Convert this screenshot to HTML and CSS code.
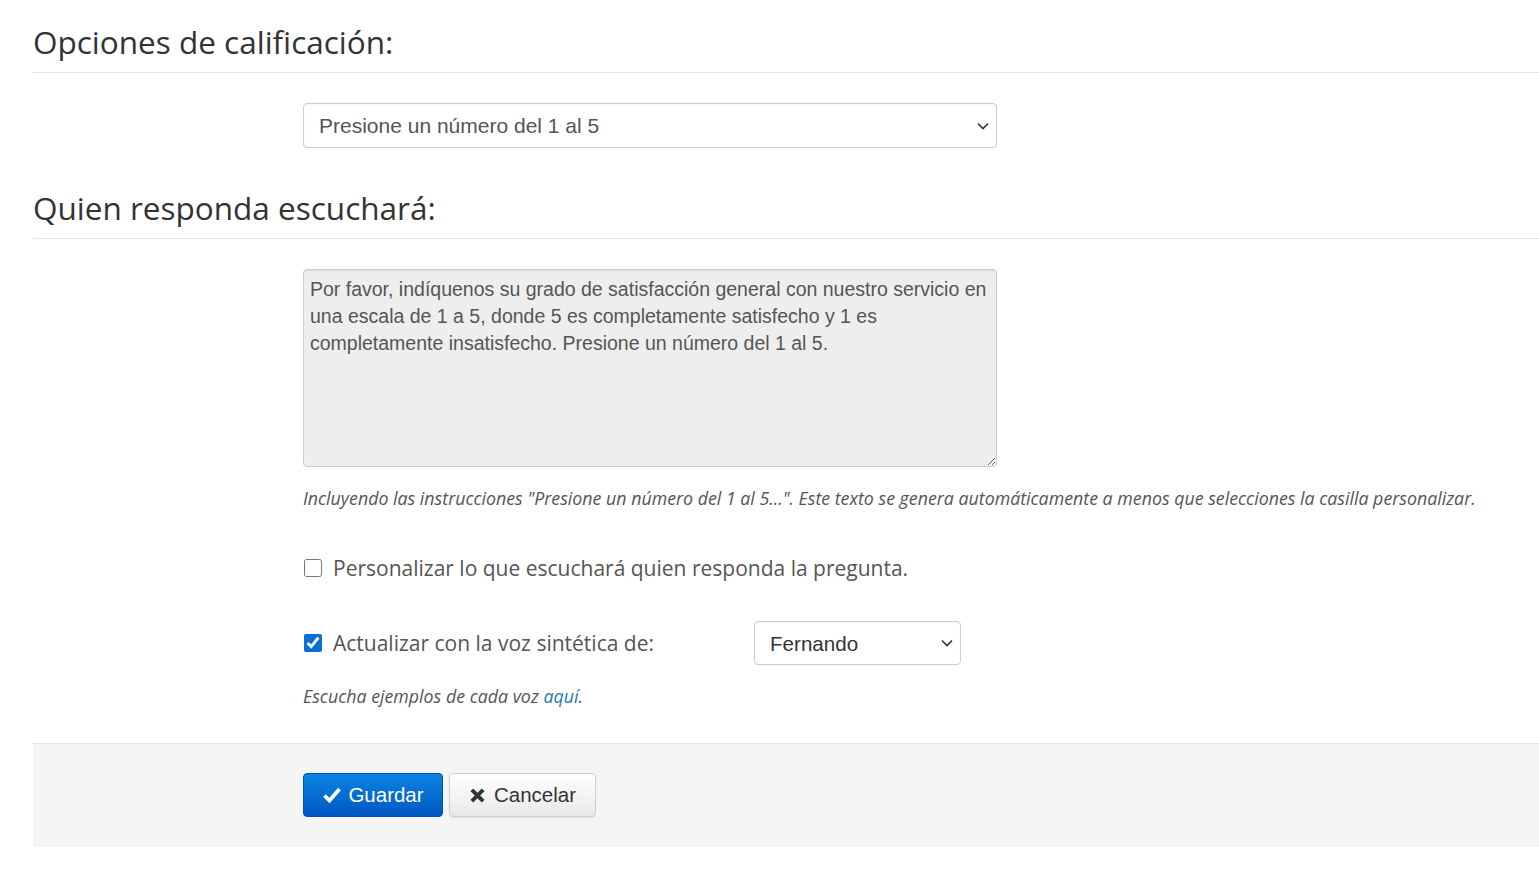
FILE: index.html
```html
<!DOCTYPE html>
<html lang="es">
<head>
<meta charset="utf-8">
<title>Opciones de calificación</title>
<link rel="stylesheet" href="styles.css">
</head>
<body>
<div class="page">
  <section class="section">
    <h2 class="section-title">Opciones de calificación:</h2>
    <div class="field">
      <div class="select-wrap select-wide">
        <select class="select"><option>Presione un número del 1 al 5</option></select>
        <svg class="chevron" viewBox="0 0 12 8" width="12" height="8"><path d="M1 1.5 L6 6.5 L11 1.5" fill="none" stroke="#333" stroke-width="1.6"/></svg>
      </div>
    </div>
  </section>

  <section class="section section-second">
    <h2 class="section-title">Quien responda escuchará:</h2>
    <div class="field">
      <textarea class="textarea" readonly>Por favor, indíquenos su grado de satisfacción general con nuestro servicio en una escala de 1 a 5, donde 5 es completamente satisfecho y 1 es completamente insatisfecho. Presione un número del 1 al 5.</textarea>
      <p class="help help-first">Incluyendo las instrucciones "Presione un número del 1 al 5...". Este texto se genera automáticamente a menos que selecciones la casilla personalizar.</p>

      <label class="check-row row-first">
        <input type="checkbox" class="check">
        <span class="check-label">Personalizar lo que escuchará quien responda la pregunta.</span>
      </label>

      <div class="check-row row-second">
        <input type="checkbox" class="check" checked>
        <span class="check-label label-fixed">Actualizar con la voz sintética de:</span>
        <div class="select-wrap select-voice">
          <select class="select"><option>Fernando</option></select>
          <svg class="chevron" viewBox="0 0 12 8" width="12" height="8"><path d="M1 1.5 L6 6.5 L11 1.5" fill="none" stroke="#333" stroke-width="1.6"/></svg>
        </div>
      </div>

      <p class="help help-last">Escucha ejemplos de cada voz <a href="#" class="link">aquí</a>.</p>
    </div>
  </section>

  <div class="footer">
    <div class="actions">
      <button class="btn btn-primary">
        <svg class="btn-icon" viewBox="0 0 20 18" width="20" height="18"><path d="M2.5 9.5 L7.5 14.5 L17.5 3" fill="none" stroke="#fff" stroke-width="3.8" stroke-linejoin="miter"/></svg>
        <span>Guardar</span>
      </button>
      <button class="btn btn-default">
        <svg class="btn-icon" viewBox="0 0 18 18" width="17" height="17"><path d="M3 3 L15 15 M15 3 L3 15" fill="none" stroke="#333" stroke-width="4"/></svg>
        <span>Cancelar</span>
      </button>
    </div>
  </div>
</div>
</body>
</html>
```

FILE: styles.css
```css
html, body {
  margin: 0;
  padding: 0;
  background: #fff;
}

body {
  font-family: "Open Sans", "Liberation Sans", sans-serif;
  color: #333;
  overflow: hidden;
}

.page {
  padding-left: 33px;
}

.section-title {
  margin: 0;
  font-family: "Open Sans", sans-serif;
  font-weight: 400;
  font-size: 31.5px;
  line-height: 40px;
  color: #333;
  padding-bottom: 10px;
  border-bottom: 1px solid #e5e5e5;
}

.section {
  padding-top: 22px;
}

.section-second {
  padding-top: 40px;
}

.field {
  padding-left: 270px;
  padding-top: 30px;
}

.select-wrap {
  position: relative;
}

.select-wide {
  width: 694px;
}

.select-voice {
  width: 207px;
}

.select {
  appearance: none;
  -webkit-appearance: none;
  display: block;
  width: 100%;
  height: 45px;
  box-sizing: border-box;
  margin: 0;
  padding: 0 36px 0 15px;
  border: 1px solid #ccc;
  border-radius: 4px;
  background: #fff;
  font-family: "Liberation Sans", Arial, sans-serif;
  font-size: 21px;
  color: #555;
  box-shadow: inset 0 1px 1px rgba(0,0,0,0.04);
}

.select-voice .select {
  height: 44px;
  color: #333;
  font-size: 20.6px;
}

.chevron {
  position: absolute;
  right: 8px;
  top: 50%;
  margin-top: -4px;
  pointer-events: none;
}

.textarea {
  display: block;
  width: 694px;
  height: 198px;
  box-sizing: border-box;
  margin: 0;
  padding: 6px 6px;
  border: 1px solid #ccc;
  border-radius: 4px;
  background: #eee;
  font-family: "Liberation Sans", Arial, sans-serif;
  font-size: 19.5px;
  line-height: 27px;
  color: #555;
  resize: vertical;
  box-shadow: inset 0 1px 1px rgba(0,0,0,0.06);
}

.help {
  margin: 0;
  font-style: italic;
  font-size: 17.8px;
  line-height: 24px;
  color: #555;
}

.help-first {
  margin-top: 19px;
}

.help-last {
  margin-top: 19px;
}

.link {
  color: #2a7ab0;
  text-decoration: none;
}

.check-row {
  display: flex;
  align-items: center;
  height: 44px;
}

.row-first {
  margin-top: 36px;
}

.row-second {
  margin-top: 31px;
}

.check {
  width: 18px;
  height: 18px;
  margin: 0 11px 0 1px;
  accent-color: #0b6ed8;
}

.check-label {
  font-size: 21px;
  color: #555;
}

.label-fixed {
  width: 421px;
}

.footer {
  margin-top: 35px;
  background: #f5f5f5;
  border-top: 1px solid #e5e5e5;
  padding: 29px 0 30px 270px;
}

.actions {
  display: flex;
  gap: 6px;
}

.btn {
  display: flex;
  align-items: center;
  justify-content: center;
  gap: 6px;
  height: 44px;
  box-sizing: border-box;
  border-radius: 4px;
  font-family: "Liberation Sans", Arial, sans-serif;
  font-size: 20.5px;
  padding: 0;
  cursor: pointer;
}

.btn-primary {
  width: 140px;
  color: #fff;
  background: linear-gradient(to bottom, #0a83e2 0%, #0058c1 100%);
  border: 1px solid #0052b0;
}

.btn-default {
  width: 147px;
  color: #333;
  background: linear-gradient(to bottom, #ffffff 0%, #e8e8e8 100%);
  border: 1px solid #cfcfcf;
  box-shadow: 0 1px 1px rgba(0,0,0,0.08);
  gap: 8px;
}

.btn-icon {
  display: block;
}
```
